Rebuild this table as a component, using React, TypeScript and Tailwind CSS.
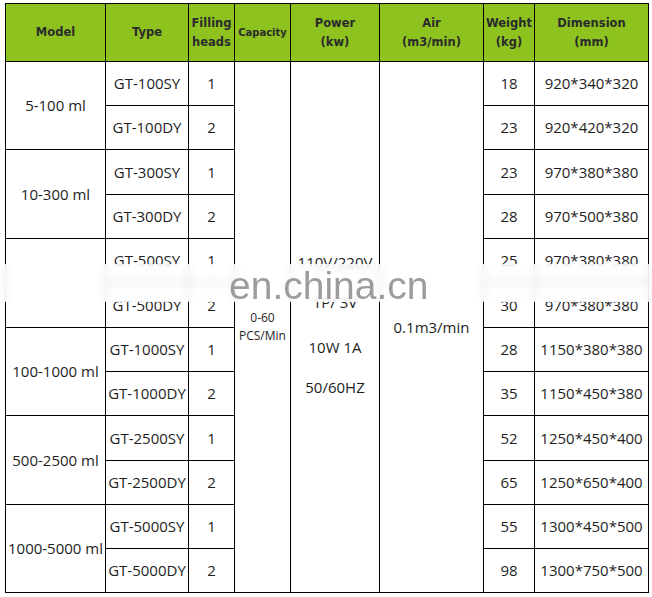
import React from 'react';

type Row = { model?: string; type: string; heads: string; weight: string; dim: string };

const rows: Row[] = [
  { model: '5-100 ml', type: 'GT-100SY', heads: '1', weight: '18', dim: '920*340*320' },
  { type: 'GT-100DY', heads: '2', weight: '23', dim: '920*420*320' },
  { model: '10-300 ml', type: 'GT-300SY', heads: '1', weight: '23', dim: '970*380*380' },
  { type: 'GT-300DY', heads: '2', weight: '28', dim: '970*500*380' },
  { model: '', type: 'GT-500SY', heads: '1', weight: '25', dim: '970*380*380' },
  { type: 'GT-500DY', heads: '2', weight: '30', dim: '970*380*380' },
  { model: '100-1000 ml', type: 'GT-1000SY', heads: '1', weight: '28', dim: '1150*380*380' },
  { type: 'GT-1000DY', heads: '2', weight: '35', dim: '1150*450*380' },
  { model: '500-2500 ml', type: 'GT-2500SY', heads: '1', weight: '52', dim: '1250*450*400' },
  { type: 'GT-2500DY', heads: '2', weight: '65', dim: '1250*650*400' },
  { model: '1000-5000 ml', type: 'GT-5000SY', heads: '1', weight: '55', dim: '1300*450*500' },
  { type: 'GT-5000DY', heads: '2', weight: '98', dim: '1300*750*500' },
];

const headers = [
  ['Model'],
  ['Type'],
  ['Filling', 'heads'],
  ['Capacity'],
  ['Power', '(kw)'],
  ['Air', '(m3/min)'],
  ['Weight', '(kg)'],
  ['Dimension', '(mm)'],
];

const cell = 'flex items-center justify-center border-r border-b border-black text-center';

export default function App() {
  return (
    <div className="relative w-[652px] h-[597px] bg-white pt-[3px] pl-[5px] text-[#1e1e1e] font-['Open_Sans','Noto_Sans',sans-serif]">
      <div className="grid w-[644px] border-l border-t border-black grid-cols-[100px_83px_46px_56px_89px_104px_51px_114px] grid-rows-[58px_44px_44px_45px_44px_44px_45px_44px_44px_45px_44px_44px_44px]">
        {headers.map((h, i) => (
          <div
            key={i}
            className={`${cell} flex-col bg-[#8dc21f] ${h[0] === 'Capacity' ? 'text-[10px]' : 'text-[11.5px]'} leading-[19px] font-bold text-[#2b2b2b] font-['DejaVu_Sans',sans-serif]`}
          >
            {h.map((t) => (
              <span key={t}>{t}</span>
            ))}
          </div>
        ))}

        {rows.map((r, i) => (
          <React.Fragment key={r.type}>
            {r.model !== undefined && (
              <div className={`${cell} row-span-2 text-[15px]`}>{r.model}</div>
            )}
            <div className={`${cell} text-[15px]`}>{r.type}</div>
            <div className={`${cell} text-[15px]`}>{r.heads}</div>
            {i === 0 && (
              <>
                <div className={`${cell} row-span-12 flex-col text-[12px] leading-[18px]`}>
                  <span>0-60</span>
                  <span>PCS/Min</span>
                </div>
                <div className={`${cell} row-span-12 flex-col pb-[6px] text-[15px] leading-[20px]`}>
                  <span>110V/220V</span>
                  <span className="mt-[20px]">1P/ 3V</span>
                  <span className="mt-[25px]">10W 1A</span>
                  <span className="mt-[20px]">50/60HZ</span>
                </div>
                <div className={`${cell} row-span-12 text-[15px]`}>0.1m3/min</div>
              </>
            )}
            <div className={`${cell} text-[15px]`}>{r.weight}</div>
            <div className={`${cell} text-[15px]`}>{r.dim}</div>
          </React.Fragment>
        ))}
      </div>

      {/* watermark band */}
      <div className="absolute left-0 top-[264px] w-[652px] h-[38px] bg-white/75 backdrop-blur-[4px]" />
      <div className="absolute left-[229px] top-[266px] text-[39px] leading-[39px] text-[#9c9c9c] font-['Liberation_Sans',Arial,sans-serif]">
        en.china.cn
      </div>
    </div>
  );
}
